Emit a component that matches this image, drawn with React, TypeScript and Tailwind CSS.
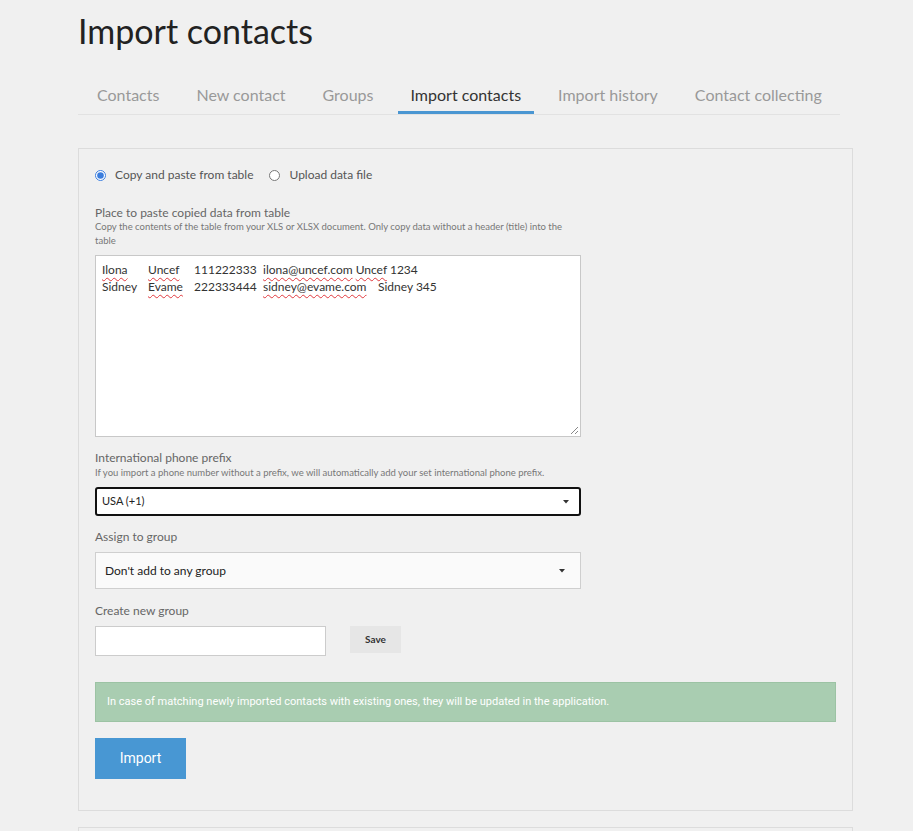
import React from "react";

const tabs = [
  "Contacts",
  "New contact",
  "Groups",
  "Import contacts",
  "Import history",
  "Contact collecting",
];

const Caret = () => (
  <svg width="6" height="4" viewBox="0 0 6 4" className="shrink-0">
    <polygon points="0,0 6,0 3,3.5" fill="#333" />
  </svg>
);

const Misspelled = ({ children }: { children: React.ReactNode }) => (
  <span className="underline decoration-wavy decoration-[#e0393e] decoration-[1px] underline-offset-[3px]">
    {children}
  </span>
);

const App: React.FC = () => {
  return (
    <div className="min-h-screen bg-[#f0f0f0] font-['Lato','Noto_Sans',sans-serif] text-[#333] overflow-hidden">
      <div className="ml-[78px] w-[775px]">
        <h1 className="pt-[11px] text-[34px] leading-[40px] text-[#222]">
          Import contacts
        </h1>

        {/* tabs */}
        <div className="mt-[27px] w-[762px] border-b border-[#e2e2e2] flex pl-[6px] gap-[11px] whitespace-nowrap">
          {tabs.map((t) => {
            const active = t === "Import contacts";
            return (
              <div
                key={t}
                className={
                  active
                    ? "shrink-0 h-[36px] px-[13px] flex items-center text-[16px] text-[#333] border-b-[3px] border-[#4a96d2] -mb-px"
                    : "shrink-0 h-[36px] px-[13px] flex items-center text-[16px] text-[#999] pb-[3px]"
                }
              >
                {t}
              </div>
            );
          })}
        </div>

        {/* form panel */}
        <div className="mt-[33px] border border-[#dcdcdc] px-[16px] pt-[19px] pb-[31px]">
          <div className="flex items-center h-[14px] text-[12px] text-[#555]">
            <input
              type="radio"
              checked
              readOnly
              className="m-0 w-[11px] h-[11px] accent-[#3b7ddd]"
            />
            <span className="ml-[9px]">Copy and paste from table</span>
            <input
              type="radio"
              readOnly
              className="m-0 ml-[16px] w-[11px] h-[11px]"
            />
            <span className="ml-[9px]">Upload data file</span>
          </div>

          <div className="mt-[23px] text-[12px] leading-[15px] text-[#666]">
            Place to paste copied data from table
          </div>
          <div className="w-[486px] text-[9.5px] leading-[14px] text-[#777]">
            Copy the contents of the table from your XLS or XLSX document. Only
            copy data without a header (title) into the table
          </div>

          <div className="relative mt-[7px] w-[486px] h-[182px] bg-white border border-[#c8c8c8] pl-[6px] pt-[5px] text-[12px] leading-[17px] text-[#333]">
            <div className="flex whitespace-nowrap">
              <span className="w-[46px]">
                <Misspelled>Ilona</Misspelled>
              </span>
              <span className="w-[46px]">
                <Misspelled>Uncef</Misspelled>
              </span>
              <span className="w-[69px]">111222333</span>
              <span>
                <Misspelled>ilona@uncef.com</Misspelled>{" "}
                <Misspelled>Uncef</Misspelled> 1234
              </span>
            </div>
            <div className="flex whitespace-nowrap">
              <span className="w-[46px]">Sidney</span>
              <span className="w-[46px]">
                <Misspelled>Evame</Misspelled>
              </span>
              <span className="w-[69px]">222333444</span>
              <span className="w-[115px]">
                <Misspelled>sidney@evame.com</Misspelled>
              </span>
              <span>Sidney 345</span>
            </div>
            <svg
              width="9"
              height="9"
              viewBox="0 0 9 9"
              className="absolute right-[1px] bottom-[1px]"
            >
              <line x1="1" y1="8" x2="8" y2="1" stroke="#888" strokeWidth="1" />
              <line x1="5" y1="8" x2="8" y2="5" stroke="#888" strokeWidth="1" />
            </svg>
          </div>

          <div className="mt-[13px] text-[12px] leading-[16px] text-[#666]">
            International phone prefix
          </div>
          <div className="text-[9.5px] leading-[14px] text-[#777]">
            If you import a phone number without a prefix, we will automatically
            add your set international phone prefix.
          </div>
          <div className="mt-[7px] w-[486px] h-[29px] bg-white border-2 border-[#111] rounded-[3px] flex items-center justify-between pl-[5px] pr-[10px] text-[11px] text-[#222]">
            <span>USA (+1)</span>
            <Caret />
          </div>

          <div className="mt-[13px] text-[12px] leading-[16px] text-[#666]">
            Assign to group
          </div>
          <div className="mt-[7px] w-[486px] h-[37px] bg-[#fafafa] border border-[#cfcfcf] flex items-center justify-between pl-[9px] pr-[15px] text-[12px] text-[#222]">
            <span>Don't add to any group</span>
            <Caret />
          </div>

          <div className="mt-[14px] text-[12px] leading-[16px] text-[#666]">
            Create new group
          </div>
          <div className="mt-[7px] flex items-start gap-[24px]">
            <div className="w-[231px] h-[30px] bg-white border border-[#cccccc]" />
            <button className="w-[51px] h-[27px] bg-[#e6e6e6] text-[10px] font-bold text-[#333]">
              Save
            </button>
          </div>

          <div className="mt-[26px] h-[40px] bg-[#a9cdb1] border border-[#9cc3a4] flex items-center px-[11px] text-[11px] text-white font-['Liberation_Sans_Narrow','Roboto',sans-serif]">
            In case of matching newly imported contacts with existing ones, they
            will be updated in the application.
          </div>

          <button className="mt-[16px] w-[91px] h-[41px] bg-[#4897d3] text-white text-[14px] font-['Liberation_Sans_Narrow','Roboto',sans-serif]">
            Import
          </button>
        </div>

        <div className="mt-[16px] h-[100px] border border-[#dcdcdc]" />
      </div>
    </div>
  );
};

export default App;
